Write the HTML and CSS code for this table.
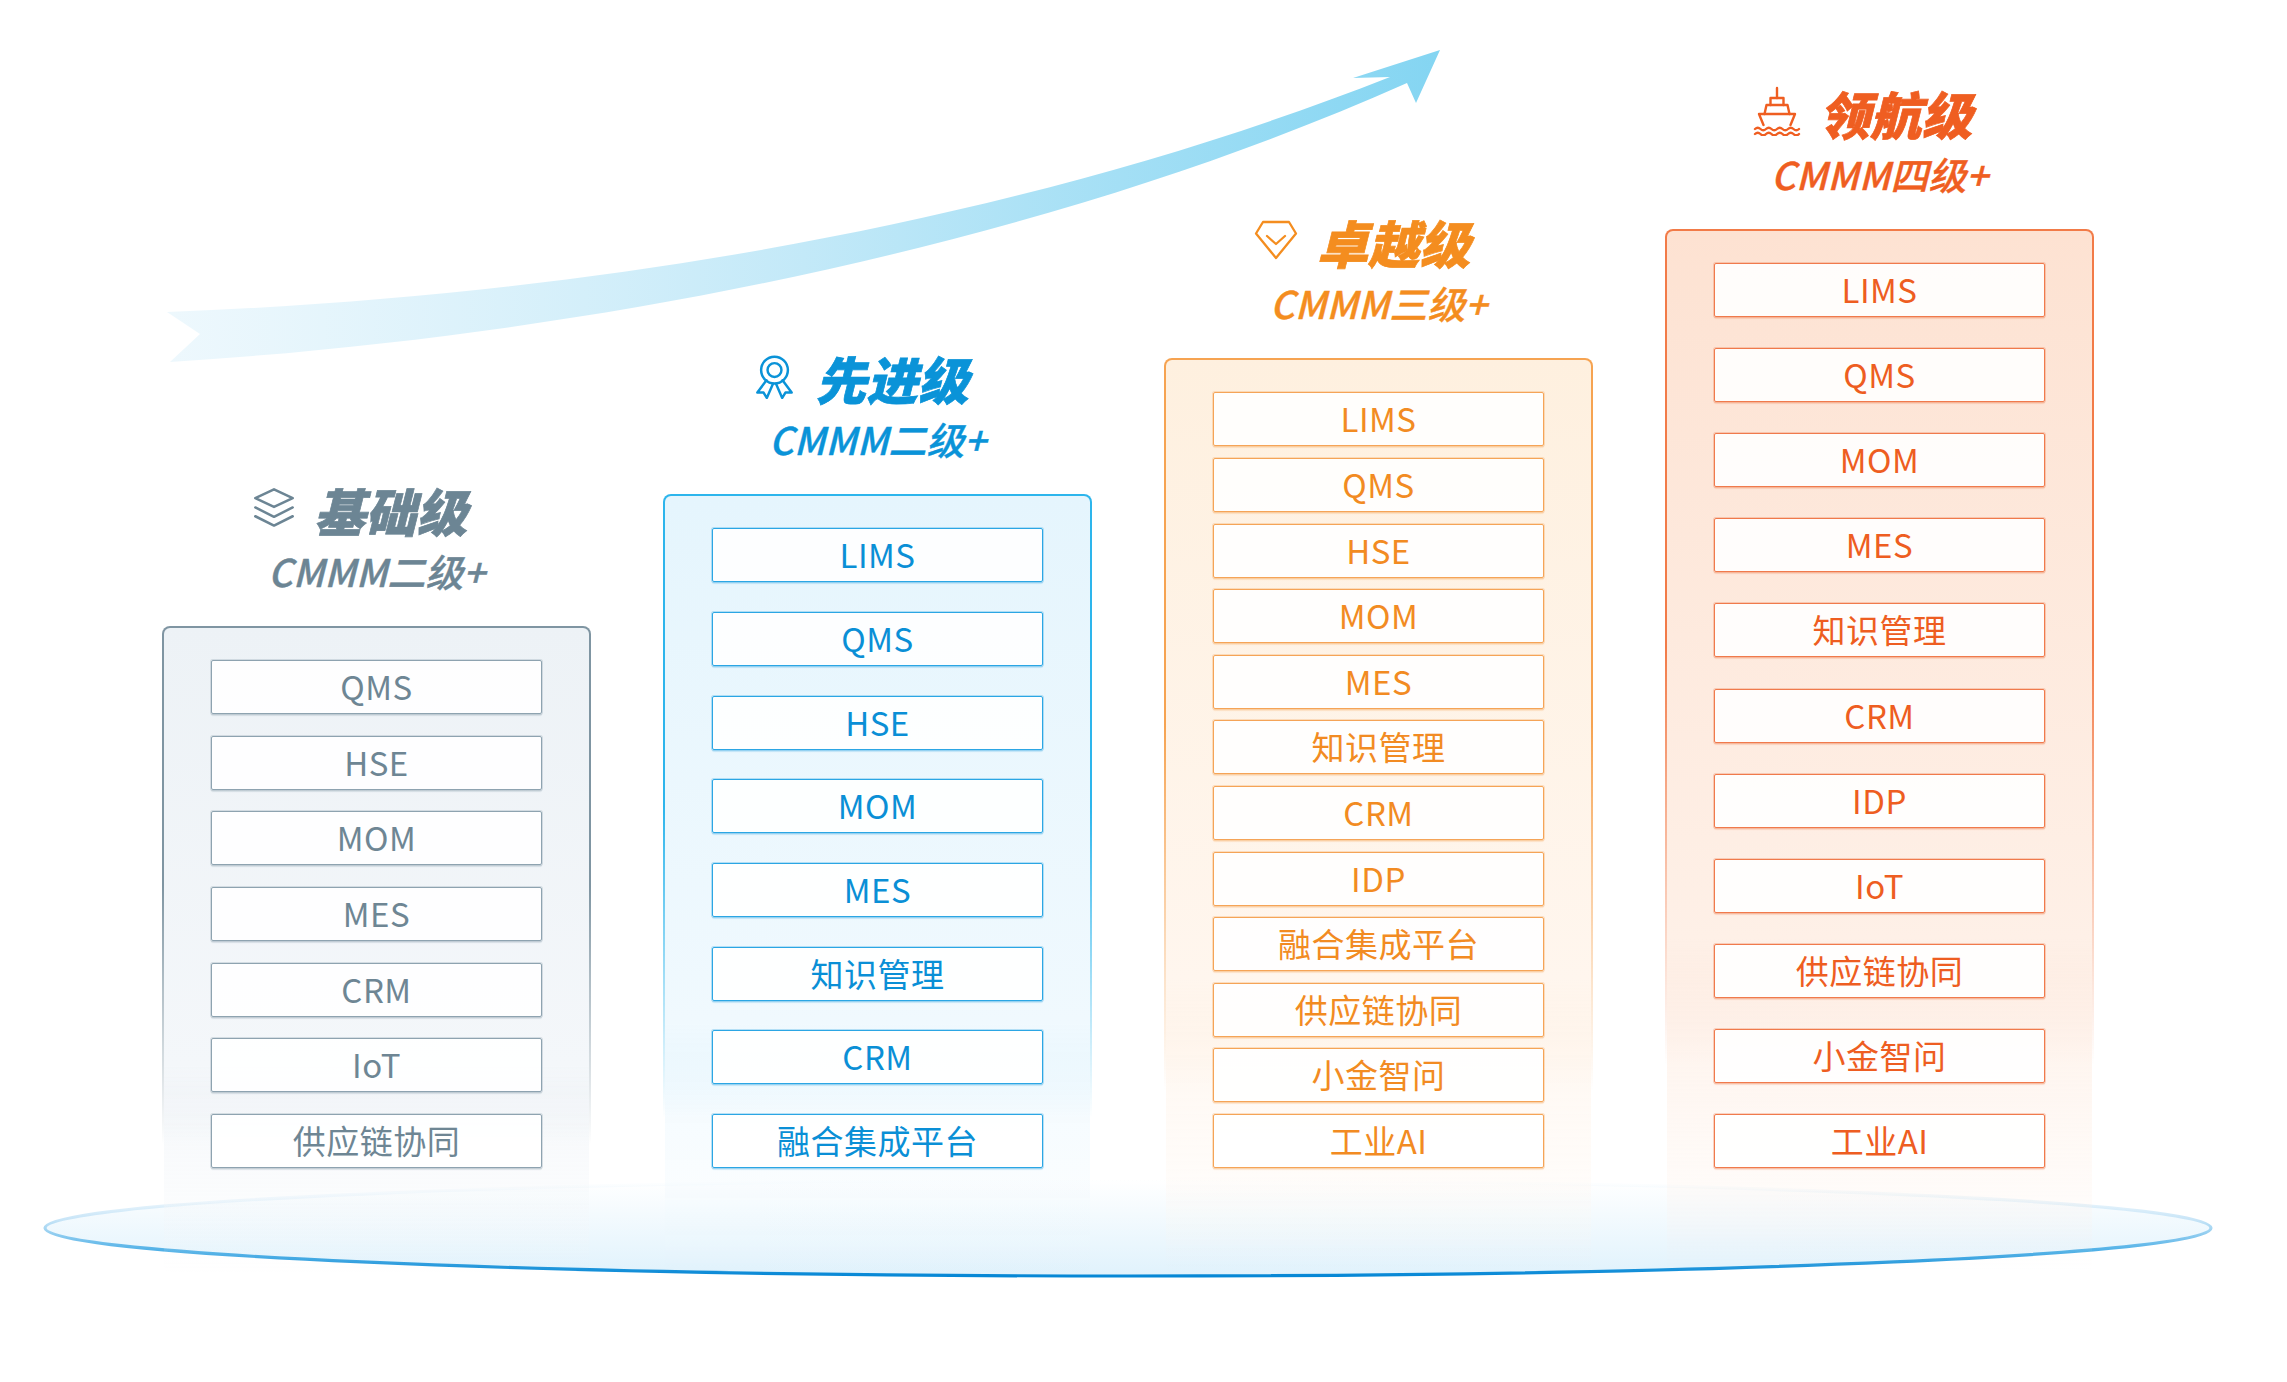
FILE: index.html
```html
<!DOCTYPE html>
<html lang="zh-CN">
<head>
<meta charset="utf-8">
<title>CMMM 等级</title>
<link rel="stylesheet" href="styles.css">
</head>
<body>
<div class="stage">
  <svg class="backdrop" viewBox="0 0 2287 1382" width="2287" height="1382" aria-hidden="true">
    <defs>
      <linearGradient id="arrowGrad" x1="167" y1="0" x2="1440" y2="0" gradientUnits="userSpaceOnUse">
        <stop offset="0" stop-color="#e6f5fc" stop-opacity="0.7"/>
        <stop offset="0.5" stop-color="#c3e9f8"/>
        <stop offset="1" stop-color="#84d5f2"/>
      </linearGradient>
      <linearGradient id="baseFill" x1="0" y1="0" x2="0" y2="1">
        <stop offset="0" stop-color="#ffffff"/>
        <stop offset="1" stop-color="#e0f2fc"/>
      </linearGradient>
      <linearGradient id="baseStroke" x1="0" y1="0" x2="0" y2="1">
        <stop offset="0" stop-color="#e2f1fb" stop-opacity="0"/>
        <stop offset="0.42" stop-color="#c6e4f7"/>
        <stop offset="0.75" stop-color="#4aaee6"/>
        <stop offset="1" stop-color="#0687d5"/>
      </linearGradient>
    </defs>
    <path d="M167,312 C617,295 1040,215 1390,77 L1353,78 L1440,50 L1416,103 L1407,83 C1077,230 640,332 170,362 L200,334 Z" fill="url(#arrowGrad)"/>
    <ellipse cx="1128" cy="1228" rx="1083" ry="48" fill="url(#baseFill)" stroke="url(#baseStroke)" stroke-width="3.2"/>
  </svg>

  <div class="levels">
    <section class="level lv1">
      <header class="level-head">
        <h2 class="level-title">
          <svg class="icon icon-layers" viewBox="0 0 40 40" aria-hidden="true">
            <path d="M20 3 L37 11 L20 19 L3 11 Z"/>
            <path d="M3 19.5 L20 28 L37 19.5"/>
            <path d="M3 27.5 L20 36 L37 27.5"/>
          </svg>
          <span>基础级</span>
        </h2>
        <p class="level-sub">CMMM二级+</p>
      </header>
      <ul class="panel">
        <li class="item">QMS</li>
        <li class="item">HSE</li>
        <li class="item">MOM</li>
        <li class="item">MES</li>
        <li class="item">CRM</li>
        <li class="item">IoT</li>
        <li class="item">供应链协同</li>
      </ul>
    </section>

    <section class="level lv2">
      <header class="level-head">
        <h2 class="level-title">
          <svg class="icon icon-award" viewBox="0 0 42 42" aria-hidden="true">
            <circle cx="21" cy="15" r="12.5"/>
            <circle cx="21" cy="15" r="6.5"/>
            <path d="M13.5 24.5 L5 36 L10.8 36 L13.8 41 L19.5 28"/>
            <path d="M28.5 24.5 L37 36 L31.2 36 L28.2 41 L22.5 28"/>
          </svg>
          <span>先进级</span>
        </h2>
        <p class="level-sub">CMMM二级+</p>
      </header>
      <ul class="panel">
        <li class="item">LIMS</li>
        <li class="item">QMS</li>
        <li class="item">HSE</li>
        <li class="item">MOM</li>
        <li class="item">MES</li>
        <li class="item">知识管理</li>
        <li class="item">CRM</li>
        <li class="item">融合集成平台</li>
      </ul>
    </section>

    <section class="level lv3">
      <header class="level-head">
        <h2 class="level-title">
          <svg class="icon icon-gem" viewBox="0 0 46 42" aria-hidden="true">
            <path d="M10 3 L36 3 L43 14.5 L23 39 L3 14.5 Z"/>
            <path d="M14 17 L23 25 L32 17"/>
          </svg>
          <span>卓越级</span>
        </h2>
        <p class="level-sub">CMMM三级+</p>
      </header>
      <ul class="panel">
        <li class="item">LIMS</li>
        <li class="item">QMS</li>
        <li class="item">HSE</li>
        <li class="item">MOM</li>
        <li class="item">MES</li>
        <li class="item">知识管理</li>
        <li class="item">CRM</li>
        <li class="item">IDP</li>
        <li class="item">融合集成平台</li>
        <li class="item">供应链协同</li>
        <li class="item">小金智问</li>
        <li class="item">工业AI</li>
      </ul>
    </section>

    <section class="level lv4">
      <header class="level-head">
        <h2 class="level-title">
          <svg class="icon icon-ship" viewBox="7 5 48 50" aria-hidden="true">
            <path d="M31 7 V17"/>
            <path d="M24.5 24 V17 H37.5 V24"/>
            <path d="M18.5 33 L20.5 24 H41.5 L43.5 33"/>
            <path d="M13 33 H49 L44.5 44 M17.5 44 L13 33"/>
            <path d="M9 48 q2.75 -2.6 5.5 0 t5.5 0 t5.5 0 t5.5 0 t5.5 0 t5.5 0 t5.5 0 t5.5 0"/>
            <path d="M9 53 q2.75 -2.6 5.5 0 t5.5 0 t5.5 0 t5.5 0 t5.5 0 t5.5 0 t5.5 0 t5.5 0"/>
          </svg>
          <span>领航级</span>
        </h2>
        <p class="level-sub">CMMM四级+</p>
      </header>
      <ul class="panel">
        <li class="item">LIMS</li>
        <li class="item">QMS</li>
        <li class="item">MOM</li>
        <li class="item">MES</li>
        <li class="item">知识管理</li>
        <li class="item">CRM</li>
        <li class="item">IDP</li>
        <li class="item">IoT</li>
        <li class="item">供应链协同</li>
        <li class="item">小金智问</li>
        <li class="item">工业AI</li>
      </ul>
    </section>
  </div>
</div>
</body>
</html>
```

FILE: styles.css
```css
html, body {
  margin: 0;
  padding: 0;
  background: #ffffff;
}

body {
  font-family: "Noto Sans CJK SC", "Noto Sans", "Liberation Sans", sans-serif;
}

.stage {
  position: relative;
  width: 2287px;
  height: 1382px;
  overflow: hidden;
  background: #ffffff;
}

.backdrop {
  position: absolute;
  left: 0;
  top: 0;
  z-index: 0;
}

.levels {
  position: relative;
  z-index: 1;
  display: flex;
  align-items: flex-end;
  gap: 72px;
  height: 1382px;
  box-sizing: border-box;
  padding: 0 0 108px 162px;
}

.level {
  width: 429px;
  display: flex;
  flex-direction: column;
  align-items: stretch;
}

.level-head {
  display: flex;
  flex-direction: column;
  align-items: center;
  margin-bottom: 33px;
}

.level-title {
  margin: 0;
  display: flex;
  align-items: center;
  gap: 18px;
  padding-right: 34px;
  height: 60px;
  font-size: 51px;
  line-height: 60px;
  font-weight: 900;
  font-style: italic;
  color: var(--title);
  -webkit-text-stroke: 0.7px var(--title);
}

.level-title span {
  display: block;
  padding-top: 4px;
}

.icon {
  display: block;
  fill: none;
  stroke: var(--title);
  stroke-width: 2.3;
  stroke-linejoin: round;
  stroke-linecap: round;
}

.icon-layers { width: 44px; height: 44px; }
.icon-award { width: 45px; height: 45px; }
.icon-gem { width: 46px; height: 42px; }
.icon-ship { width: 48px; height: 50px; stroke-width: 2.4; }

.level-sub {
  margin: 11px 0 0;
  font-size: 38px;
  line-height: 44px;
  font-weight: 500;
  font-style: italic;
  color: var(--title);
  -webkit-text-stroke: 0.4px var(--title);
}

.panel {
  list-style: none;
  margin: 0;
  padding: 32px 47px 104px;
  display: flex;
  flex-direction: column;
  align-items: center;
  gap: var(--gap);
  border: 2px solid transparent;
  border-radius: 8px;
  background:
    linear-gradient(to bottom, var(--fill) 0%, var(--fill2) 68%, rgba(255, 255, 255, 0) 100%) padding-box,
    linear-gradient(to bottom, var(--line) 0%, var(--line) 40%, rgba(255, 255, 255, 0) 80%) border-box;
}

.item {
  width: 331px;
  height: 54px;
  box-sizing: border-box;
  border: 1px solid var(--item-line);
  border-radius: 2px;
  background: rgba(255, 255, 255, 0.9);
  box-shadow: 0 0 0 1px var(--item-halo), 0 2px 1px var(--item-shadow);
  text-align: center;
  font-size: 33px;
  line-height: 50px;
  letter-spacing: 0.5px;
  color: var(--text);
  padding-bottom: 2px;
}

.lv1 {
  --title: #6c8594;
  --text: #6e8694;
  --line: #7f95a2;
  --fill: #edf2f6;
  --fill2: #f4f7fa;
  --item-line: #8ea3b0;
  --item-halo: rgba(142, 163, 176, 0.3);
  --item-shadow: rgba(110, 134, 148, 0.2);
  --gap: 21.7px;
}

.lv2 {
  --title: #0a93d8;
  --text: #0a8fd6;
  --line: #2db5ec;
  --fill: #e5f5fd;
  --fill2: #f0f9fe;
  --item-line: #2ba6e4;
  --item-halo: rgba(43, 166, 228, 0.3);
  --item-shadow: rgba(10, 143, 214, 0.18);
  --gap: 29.7px;
}

.lv3 {
  --title: #f48d1f;
  --text: #f28b22;
  --line: #f6a351;
  --fill: #fef0df;
  --fill2: #fff6ee;
  --item-line: #f5a457;
  --item-halo: rgba(245, 164, 87, 0.3);
  --item-shadow: rgba(242, 139, 34, 0.18);
  --gap: 11.6px;
}

.lv4 {
  --title: #ef5e21;
  --text: #ee5d21;
  --line: #f27b48;
  --fill: #fde2d2;
  --fill2: #fef0e7;
  --item-line: #f07a4c;
  --item-halo: rgba(240, 122, 76, 0.3);
  --item-shadow: rgba(238, 93, 33, 0.18);
  --gap: 31.1px;
}
```
